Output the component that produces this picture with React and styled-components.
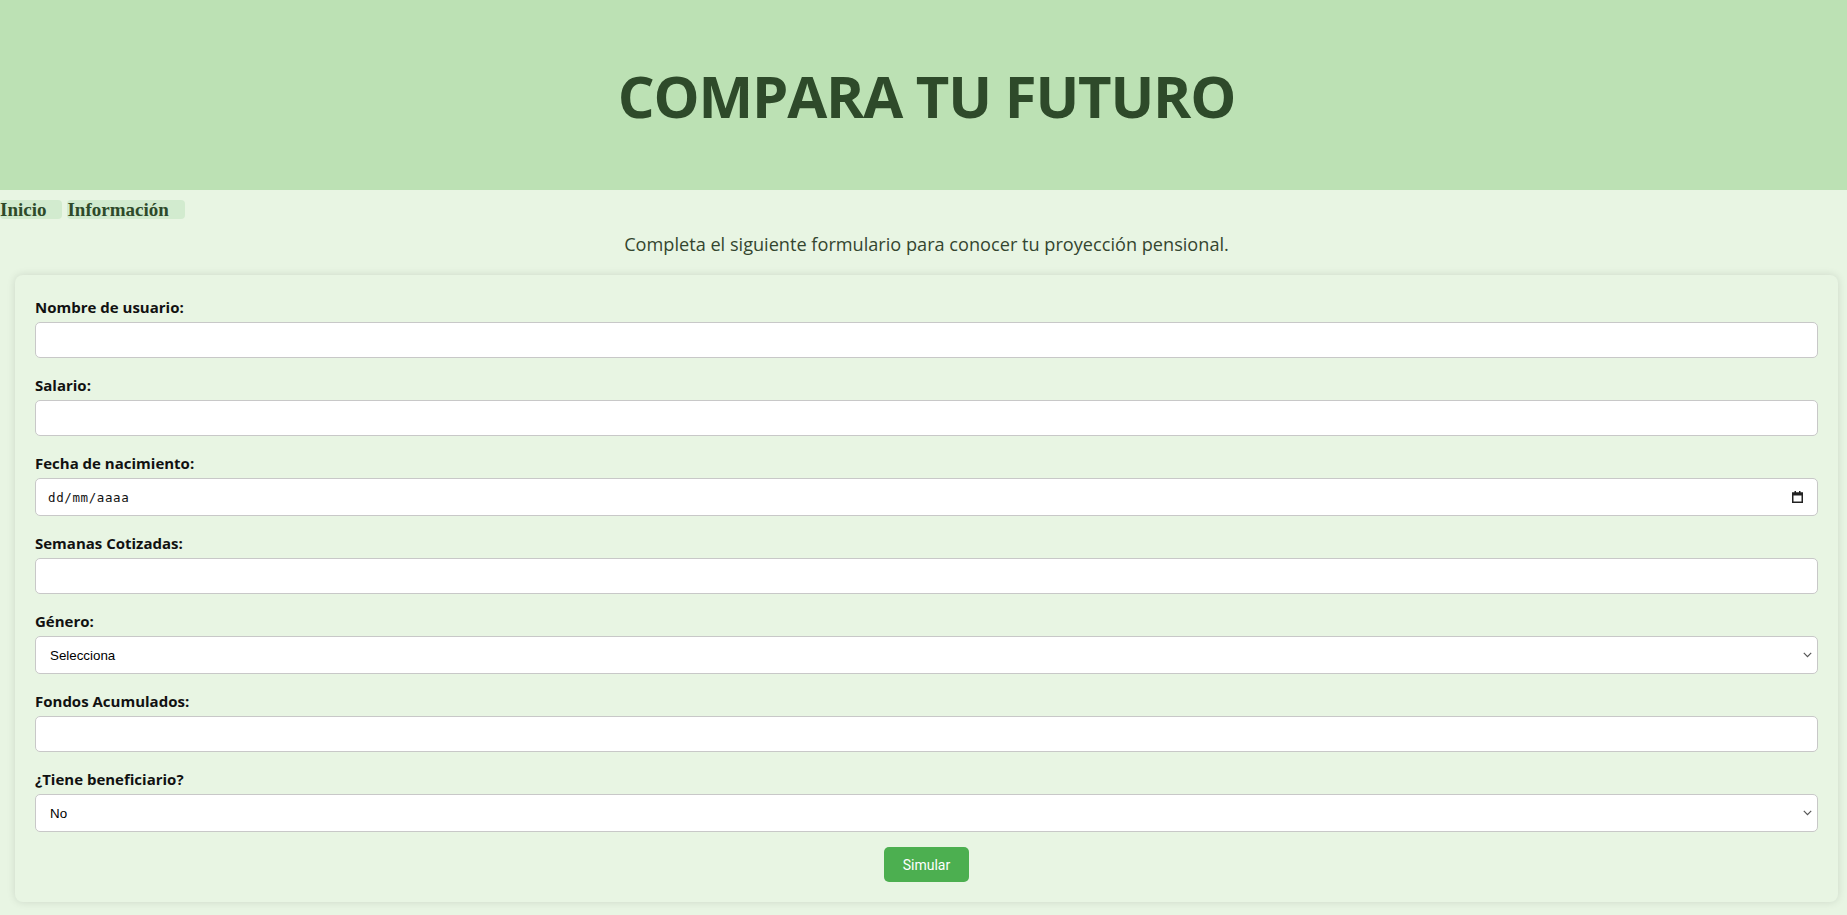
import React from "react"
import styled, { createGlobalStyle } from 'styled-components'

const GlobalStyle = createGlobalStyle`
  html, body {
    margin: 0;
    padding: 0;
    background: #e8f5e3;
  }
  * { box-sizing: border-box; }
`;

const Header = styled.header`
  height: 190px;
  padding-left: 6px;
  background: #bce1b4;
  display: flex;
  align-items: center;
  justify-content: center;
`;

const Title = styled.h1`
  margin: 0;
  font-family: "Open Sans", "Noto Sans", sans-serif;
  font-weight: 700;
  font-size: 58px;
  letter-spacing: -1.2px;
  color: #2e4a2a;
`;

const Nav = styled.nav`
  display: flex;
  gap: 5px;
  margin-top: 10px;
`;

const NavLink = styled.a`
  display: inline-block;
  padding: 0 16px 0 0;
  height: 19px;
  line-height: 19px;
  border-radius: 4px;
  background: #d2ebcf;
  font-family: "Liberation Serif", serif;
  font-weight: 700;
  font-size: 19px;
  color: #2e4a2a;
  text-decoration: none;
  cursor: pointer;
`;

const Intro = styled.p`
  margin: 13px 9px 18px 15px;
  line-height: 25px;
  text-align: center;
  font-family: "Open Sans", "Noto Sans", sans-serif;
  font-size: 18.15px;
  color: #34452f;
`;

const Card = styled.form`
  margin: 0 9px 13px 15px;
  padding: 20px;
  background: #e8f5e3;
  border-radius: 8px;
  box-shadow: 0 0 8px rgba(0, 0, 0, 0.12);
  display: flex;
  flex-direction: column;
`;

const Label = styled.label`
  display: block;
  padding-top: 2px;
  line-height: 20px;
  margin-bottom: 5px;
  font-family: "Open Sans", "Noto Sans", sans-serif;
  font-weight: 700;
  font-size: 15px;
  color: #111;
`;

const fieldBase = `
  width: 100%;
  border: 1px solid #c8c8c8;
  border-radius: 5px;
  background: #fff;
  font-family: "Liberation Sans", Arial, sans-serif;
  font-size: 13.33px;
  color: #000;
  outline: none;
`;

const Input = styled.input`
  ${fieldBase}
  margin: 0 0 15px;
  height: 36px;
  padding: 0 10px;
`;

const SelectWrap = styled.div`
  position: relative;
  margin: 0 0 15px;
  svg {
    position: absolute;
    right: 6px;
    top: 16px;
    pointer-events: none;
  }
`;

const Select = styled.select`
  ${fieldBase}
  display: block;
  height: 38px;
  padding: 0 24px 0 14px;
  appearance: none;
  -webkit-appearance: none;
`;

const DateBox = styled.div`
  ${fieldBase}
  margin: 0 0 15px;
  height: 38px;
  padding: 0 14px 0 12px;
  display: flex;
  align-items: center;
  justify-content: space-between;
`;

const DateText = styled.input`
  border: none;
  outline: none;
  background: transparent;
  padding: 0;
  flex: 1;
  font-family: "DejaVu Sans Mono", "Liberation Mono", monospace;
  font-size: 12.5px;
  letter-spacing: 0.6px;
  color: #111;
  &::placeholder { color: #111; }
`;

const Button = styled.button`
  align-self: center;
  width: 85px;
  height: 35px;
  border: none;
  border-radius: 5px;
  background: #4caf50;
  color: #fff;
  font-family: "Roboto", "Liberation Sans", sans-serif;
  font-size: 14px;
  cursor: pointer;
`;

const CalendarIcon = () => (
  <svg width="11" height="12" viewBox="0 0 11 12">
    <rect x="0.75" y="2.25" width="9.5" height="9" fill="none" stroke="#222" strokeWidth="1.5" />
    <rect x="0" y="1.5" width="11" height="3" fill="#222" />
    <rect x="2.5" y="0" width="1.5" height="2" fill="#222" />
    <rect x="7" y="0" width="1.5" height="2" fill="#222" />
  </svg>
);

const Chevron = () => (
  <svg width="9" height="6" viewBox="0 0 9 6">
    <path d="M0.8 0.8 L4.5 4.6 L8.2 0.8" fill="none" stroke="#555" strokeWidth="1.2" />
  </svg>
);

const Dropdown = ({ id, defaultValue, children }) => (
  <SelectWrap>
    <Select id={id} defaultValue={defaultValue}>{children}</Select>
    <Chevron />
  </SelectWrap>
);

const App = () => {
  return (
    <>
      <GlobalStyle />
      <Header>
        <Title>COMPARA TU FUTURO</Title>
      </Header>
      <Nav>
        <NavLink>Inicio</NavLink>
        <NavLink>Información</NavLink>
      </Nav>
      <Intro>Completa el siguiente formulario para conocer tu proyección pensional.</Intro>
      <Card onSubmit={e => e.preventDefault()}>
        <Label htmlFor="usuario">Nombre de usuario:</Label>
        <Input id="usuario" type="text" />

        <Label htmlFor="salario">Salario:</Label>
        <Input id="salario" type="text" />

        <Label htmlFor="nacimiento">Fecha de nacimiento:</Label>
        <DateBox>
          <DateText id="nacimiento" placeholder="dd/mm/aaaa" />
          <CalendarIcon />
        </DateBox>

        <Label htmlFor="semanas">Semanas Cotizadas:</Label>
        <Input id="semanas" type="text" />

        <Label htmlFor="genero">Género:</Label>
        <Dropdown id="genero" defaultValue="">
          <option value="">Selecciona</option>
          <option value="m">Masculino</option>
          <option value="f">Femenino</option>
        </Dropdown>

        <Label htmlFor="fondos">Fondos Acumulados:</Label>
        <Input id="fondos" type="text" />

        <Label htmlFor="beneficiario">¿Tiene beneficiario?</Label>
        <Dropdown id="beneficiario" defaultValue="no">
          <option value="no">No</option>
          <option value="si">Sí</option>
        </Dropdown>

        <Button type="submit">Simular</Button>
      </Card>
    </>
  );
};

export default App;
